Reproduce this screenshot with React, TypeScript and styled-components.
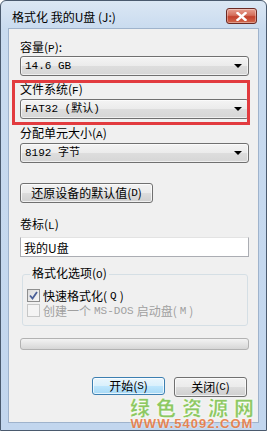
import React from "react";
import styled, { createGlobalStyle } from "styled-components";

const GlobalStyle = createGlobalStyle`
  html, body {
    margin: 0;
    padding: 0;
    background: #ffffff;
  }
  body {
    font-family: "Noto Sans CJK SC", "Liberation Sans", sans-serif;
    font-size: 12px;
    color: #000;
  }
`;

const Window = styled.div`
  position: relative;
  width: 267px;
  height: 431px;
  box-sizing: border-box;
  border: 1px solid #4a5a6e;
  border-radius: 6px 6px 0 0;
  background: linear-gradient(to bottom, #dbe7f4 0px, #c9dbef 28px, #c2d6ee 100%);
  display: flex;
  flex-direction: column;
  overflow: hidden;
`;

const TitleBar = styled.div`
  height: 27px;
  display: flex;
  align-items: center;
  justify-content: space-between;
  padding: 0 9px 0 11px;
  flex-shrink: 0;
`;

const Title = styled.span`
  font-size: 12px;
  line-height: 14px;
  color: #000;
  margin-top: 4px;
`;

const CloseButton = styled.div`
  width: 31px;
  height: 16px;
  box-sizing: border-box;
  border: 1px solid #6b2a24;
  border-radius: 3px;
  background: linear-gradient(to bottom, #e8a192 0%, #d46f5c 45%, #c3412d 55%, #d26a4e 100%);
  display: flex;
  align-items: center;
  justify-content: center;
  margin-top: 3px;
  box-shadow: inset 0 0 0 1px rgba(255, 255, 255, 0.35);
`;

const Body = styled.div`
  flex: 1;
  margin: 0 7px 7px 7px;
  border: 1px solid #9fb3cc;
  background: #f0f0f0;
  padding: 0 9px 0 11px;
  display: flex;
  flex-direction: column;
`;

const Label = styled.div<{ $top: number }>`
  margin-top: ${(p) => p.$top}px;
  height: 14px;
  line-height: 14px;
  font-size: 12px;
  white-space: nowrap;
`;

const Combo = styled.div<{ $top: number }>`
  margin-top: ${(p) => p.$top}px;
  height: 20px;
  box-sizing: border-box;
  border: 1px solid #707070;
  border-radius: 3px;
  background: linear-gradient(to bottom, #f4f4f4 0%, #ebebeb 50%, #dddddd 51%, #d6d6d6 100%);
  display: flex;
  align-items: center;
  justify-content: space-between;
  padding: 0 6px 0 4px;
  box-shadow: inset 0 0 0 1px rgba(255, 255, 255, 0.6);
`;

const ComboText = styled.span`
  font-family: "Liberation Mono", "Noto Sans CJK SC", monospace;
  font-size: 11px;
  line-height: 14px;
  white-space: pre;
`;

const Arrow = styled.span`
  width: 0;
  height: 0;
  border-left: 4px solid transparent;
  border-right: 4px solid transparent;
  border-top: 4px solid #000;
`;

const Highlight = styled.div`
  position: relative;
  display: flex;
  flex-direction: column;
  &::after {
    content: "";
    position: absolute;
    left: -8px;
    right: -1px;
    top: 4px;
    bottom: -6px;
    border: 3px solid #e23b3f;
    pointer-events: none;
  }
`;

const Button = styled.div<{ $default?: boolean; $top?: number; $width: number }>`
  margin-top: ${(p) => p.$top ?? 0}px;
  width: ${(p) => p.$width}px;
  height: ${(p) => (p.$default ? 18 : 20)}px;
  box-sizing: border-box;
  border: 1px solid ${(p) => (p.$default ? "#3c7fb1" : "#707070")};
  border-radius: 3px;
  background: ${(p) =>
    p.$default
      ? "linear-gradient(to bottom, #eaf6fd 0%, #d9f0fc 50%, #bee6fd 51%, #a7d9f5 100%)"
      : "linear-gradient(to bottom, #f2f2f2 0%, #ebebeb 50%, #dddddd 51%, #cfcfcf 100%)"};
  box-shadow: inset 0 0 0 1px rgba(255, 255, 255, 0.7);
  display: flex;
  align-items: center;
  justify-content: center;
  font-size: 12px;
  line-height: 14px;
  white-space: nowrap;
`;

const TextInput = styled.div`
  margin-top: 6px;
  height: 20px;
  box-sizing: border-box;
  border: 1px solid #abadb3;
  border-top-color: #e3e3e3;
  background: #fff;
  padding: 0 3px;
  display: flex;
  align-items: center;
  font-size: 12px;
`;

const Group = styled.fieldset`
  margin: 9px 1px 0 2px;
  padding: 7px 0 0 4px;
  height: 60px;
  box-sizing: border-box;
  border: 1px solid #d5dfe5;
  border-radius: 3px;
  display: flex;
  flex-direction: column;
  gap: 2px;
`;

const Legend = styled.legend`
  padding: 0 2px;
  margin-left: 3px;
  font-size: 12px;
  line-height: 14px;
`;

const CheckRow = styled.div<{ $disabled?: boolean }>`
  display: flex;
  align-items: center;
  gap: 3px;
  height: 13px;
  line-height: 12px;
  color: ${(p) => (p.$disabled ? "#a0a0a0" : "#000")};
  font-size: 12px;
  white-space: nowrap;
`;

const Box = styled.span<{ $disabled?: boolean }>`
  width: 13px;
  height: 13px;
  box-sizing: border-box;
  border: 1px solid ${(p) => (p.$disabled ? "#c6c7c7" : "#8e8f8f")};
  background: ${(p) =>
    p.$disabled ? "#f4f4f4" : "linear-gradient(135deg, #dcdcdc 0%, #f7f7f7 100%)"};
  display: flex;
  align-items: center;
  justify-content: center;
  flex-shrink: 0;
`;

const Mono = styled.span`
  font-family: "Liberation Mono", monospace;
  font-size: 11px;
`;

const Progress = styled.div`
  margin-top: 12px;
  height: 12px;
  box-sizing: border-box;
  border: 1px solid #b2b2b2;
  border-radius: 3px;
  background: linear-gradient(to bottom, #f3f3f3 0%, #e2e2e2 60%, #d6d6d6 100%);
`;

const ButtonRow = styled.div`
  margin-top: 27px;
  display: flex;
  justify-content: flex-end;
  gap: 9px;
  padding-right: 2px;
`;

const Watermark = styled.div`
  position: absolute;
  left: 117px;
  top: 397px;
  width: 148px;
  display: flex;
  flex-direction: column;
  align-items: center;
  pointer-events: none;
`;

const WatermarkName = styled.div`
  font-family: "Noto Sans CJK SC", sans-serif;
  font-weight: 900;
  font-size: 20px;
  line-height: 19px;
  letter-spacing: 6px;
  margin-right: -6px;
  color: #7cc24a;
  -webkit-text-stroke: 0.5px #ffffff;
  text-shadow: 0 0 2px #ffffff, 0 0 2px #ffffff;
  opacity: 0.85;
`;

const WatermarkUrl = styled.div`
  font-family: "Liberation Sans", sans-serif;
  font-weight: 700;
  font-size: 13px;
  line-height: 12px;
  margin-top: 1px;
  letter-spacing: 1px;
  color: #e8763a;
  text-shadow: 0 0 2px #ffffff;
  opacity: 0.85;
`;

function App() {
  return (
    <>
      <GlobalStyle />
      <Window>
        <TitleBar>
          <Title>格式化 我的U盘 (J:)</Title>
          <CloseButton>
            <svg width="11" height="9" viewBox="0 0 11 9">
              <path d="M1.5 1 L9.5 8 M9.5 1 L1.5 8" stroke="#fff" strokeWidth="2.4" strokeLinecap="square" />
            </svg>
          </CloseButton>
        </TitleBar>
        <Body>
          <Label $top={11}>容量(<Mono>P</Mono>):</Label>
          <Combo $top={2}>
            <ComboText>14.6 GB</ComboText>
            <Arrow />
          </Combo>
          <Highlight>
            <Label $top={6}>文件系统(<Mono>F</Mono>)</Label>
            <Combo $top={3}>
              <ComboText>FAT32 (默认)</ComboText>
              <Arrow />
            </Combo>
          </Highlight>
          <Label $top={7}>分配单元大小(<Mono>A</Mono>)</Label>
          <Combo $top={3}>
            <ComboText>8192 字节</ComboText>
            <Arrow />
          </Combo>
          <Button $top={20} $width={133}>
            还原设备的默认值(<Mono>D</Mono>)
          </Button>
          <Label $top={14}>卷标(<Mono>L</Mono>)</Label>
          <TextInput>我的U盘</TextInput>
          <Group>
            <Legend>格式化选项(<Mono>O</Mono>)</Legend>
            <CheckRow>
              <Box>
                <svg width="9" height="9" viewBox="0 0 9 9">
                  <path d="M1 4.5 L3.5 7.5 L8 1" fill="none" stroke="#4a5f97" strokeWidth="1.8" />
                </svg>
              </Box>
              快速格式化(<Mono>Q</Mono>)
            </CheckRow>
            <CheckRow $disabled>
              <Box $disabled />
              创建一个 <Mono>MS-DOS</Mono> 启动盘(<Mono>M</Mono>)
            </CheckRow>
          </Group>
          <Progress />
          <ButtonRow>
            <Button $default $width={73}>
              开始(<Mono>S</Mono>)
            </Button>
            <Button $width={73}>
              关闭(<Mono>C</Mono>)
            </Button>
          </ButtonRow>
        </Body>
        <Watermark>
          <WatermarkName>绿色资源网</WatermarkName>
          <WatermarkUrl>WWW.54092.COM</WatermarkUrl>
        </Watermark>
      </Window>
    </>
  );
}

export default App;
